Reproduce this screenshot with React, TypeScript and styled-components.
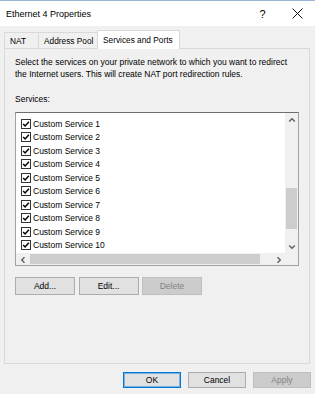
import React from "react";

import styled, { createGlobalStyle } from "styled-components";

const GlobalStyle = createGlobalStyle`
  * {
    box-sizing: border-box;
  }
  body {
    margin: 0;
    background: #f0f0f0;
    font-family: "Liberation Sans", Arial, sans-serif;
    color: #000;
  }
`;

const Window = styled.div`
  width: 315px;
  height: 394px;
  display: flex;
  flex-direction: column;
  background: #f0f0f0;
  border-top: 1px solid #9ab6d6;
  overflow: hidden;
`;

const TitleBar = styled.div`
  height: 25px;
  display: flex;
  align-items: center;
  background: #fff;
`;

const Title = styled.div`
  flex: 1;
  padding-left: 6px;
  font-size: 9px;
`;

const CaptionButton = styled.div`
  width: 35px;
  height: 25px;
  display: flex;
  align-items: center;
  justify-content: center;
  font-size: 11px;
`;

const TabStrip = styled.div`
  display: flex;
  align-items: flex-end;
  height: 19px;
  margin: 4px 0 -1px 4px;
  position: relative;
  z-index: 1;
`;

const Tab = styled.div<{ $width: number; $active?: boolean }>`
  width: ${({ $width }) => $width}px;
  height: ${({ $active }) => ($active ? 19 : 16)}px;
  margin-bottom: ${({ $active }) => ($active ? 0 : 1)}px;
  margin-left: -1px;
  padding-left: ${({ $active }) => ($active ? 5 : 5)}px;
  display: flex;
  align-items: center;
  font-size: 8.3px;
  background: ${({ $active }) => ($active ? "#fff" : "#f0f0f0")};
  border: 1px solid #d9d9d9;
  border-bottom: none;
  &:first-child {
    margin-left: 0;
  }
`;

const Panel = styled.div`
  height: 316px;
  margin: 0 5px 0 4px;
  padding: 7px 10px 0 10px;
  border: 1px solid #d9d9d9;
  background: #f0f0f0;
`;

const Description = styled.p`
  margin: 0;
  font-size: 8.5px;
  line-height: 12px;
`;

const FieldLabel = styled.div`
  margin-top: 13px;
  font-size: 8.5px;
  line-height: 12px;
`;

const ListBox = styled.div`
  margin-top: 7px;
  height: 154px;
  display: grid;
  grid-template-columns: 1fr 13px;
  grid-template-rows: 1fr 12px;
  border: 1px solid #a0a0a0;
  border-top-color: #6e6e6e;
  background: #fff;
`;

const Items = styled.div`
  padding-top: 4px;
  overflow: hidden;
  background: #fff;
`;

const Item = styled.div`
  height: 13.5px;
  display: flex;
  align-items: center;
  gap: 2px;
  padding-left: 5px;
  font-size: 8.5px;
  white-space: nowrap;
`;

const VScroll = styled.div`
  display: flex;
  flex-direction: column;
  background: #f0f0f0;
`;

const HScroll = styled.div`
  display: flex;
  background: #f0f0f0;
`;

const Corner = styled.div`
  background: #f0f0f0;
`;

const ArrowBox = styled.div`
  width: 13px;
  height: 13px;
  flex: none;
  display: flex;
  align-items: center;
  justify-content: center;
`;

const VTrack = styled.div`
  flex: 1;
  padding: 0 1px;
`;

const VThumb = styled.div<{ $offset: number; $size: number }>`
  margin-top: ${({ $offset }) => $offset}px;
  height: ${({ $size }) => $size}px;
  background: #cdcdcd;
`;

const HTrack = styled.div`
  flex: 1;
  padding: 1px 0;
`;

const HThumb = styled.div<{ $offset: number; $size: number }>`
  margin-left: ${({ $offset }) => $offset}px;
  width: ${({ $size }) => $size}px;
  height: 100%;
  background: #cdcdcd;
`;

const ButtonRow = styled.div<{ $end?: boolean }>`
  display: flex;
  justify-content: ${({ $end }) => ($end ? "flex-end" : "flex-start")};
  gap: ${({ $end }) => ($end ? 7 : 3.5)}px;
`;

const ActionRow = styled(ButtonRow)`
  margin-top: 11px;
`;

const FooterRow = styled(ButtonRow)`
  margin-top: 8px;
  padding-right: 4px;
`;

const Button = styled.button<{ $height: number; $default?: boolean }>`
  width: ${({ $height }) => ($height === 18 ? 60 : 58)}px;
  height: ${({ $height }) => $height}px;
  padding: 0;
  font-family: "Liberation Sans", Arial, sans-serif;
  font-size: 8.5px;
  color: #000;
  background: #e1e1e1;
  border: 1px solid ${({ $default }) => ($default ? "#0078d7" : "#adadad")};
  box-shadow: ${({ $default }) =>
    $default ? "inset 0 0 0 1px rgba(0, 120, 215, 0.45)" : "none"};
  &:disabled {
    color: #838383;
    background: #cccccc;
    border-color: #bfbfbf;
  }
`;

function Chevron({ dir }: { dir: "up" | "down" | "left" | "right" }) {
  const rot = { up: 0, right: 90, down: 180, left: 270 }[dir];
  return (
    <svg width="8" height="8" viewBox="0 0 8 8">
      <path
        d="M1.2 5.5 L4 2.7 L6.8 5.5"
        fill="none"
        stroke="#606060"
        strokeWidth="1.4"
        transform={`rotate(${rot} 4 4)`}
      />
    </svg>
  );
}

function CheckBox() {
  return (
    <svg width="10" height="10" viewBox="0 0 10 10" style={{ flex: "none" }}>
      <rect x="0.5" y="0.5" width="9" height="9" fill="#fff" stroke="#333" />
      <path d="M2.2 5 L4.1 7 L7.9 2.8" fill="none" stroke="#000" strokeWidth="1.5" />
    </svg>
  );
}

const services = Array.from({ length: 10 }, (_, i) => `Custom Service ${i + 1}`);

export default function App() {
  return (
    <>
      <GlobalStyle />
      <Window>
        <TitleBar>
          <Title>Ethernet 4 Properties</Title>
          <CaptionButton>?</CaptionButton>
          <CaptionButton>
            <svg width="11" height="11" viewBox="0 0 11 11">
              <path d="M0.5 0.5 L10.5 10.5 M10.5 0.5 L0.5 10.5" stroke="#111" strokeWidth="1" />
            </svg>
          </CaptionButton>
        </TitleBar>

        <TabStrip>
          <Tab $width={35}>NAT</Tab>
          <Tab $width={60}>Address Pool</Tab>
          <Tab $width={83} $active>
            Services and Ports
          </Tab>
        </TabStrip>

        <Panel>
          <Description>
            Select the services on your private network to which you want to redirect
            the Internet users. This will create NAT port redirection rules.
          </Description>
          <FieldLabel>Services:</FieldLabel>
          <ListBox>
            <Items>
              {services.map((s) => (
                <Item key={s}>
                  <CheckBox />
                  {s}
                </Item>
              ))}
            </Items>
            <VScroll>
              <ArrowBox>
                <Chevron dir="up" />
              </ArrowBox>
              <VTrack>
                <VThumb $offset={62} $size={41} />
              </VTrack>
              <ArrowBox>
                <Chevron dir="down" />
              </ArrowBox>
            </VScroll>
            <HScroll>
              <ArrowBox>
                <Chevron dir="left" />
              </ArrowBox>
              <HTrack>
                <HThumb $offset={1} $size={230} />
              </HTrack>
              <ArrowBox>
                <Chevron dir="right" />
              </ArrowBox>
            </HScroll>
            <Corner />
          </ListBox>
          <ActionRow>
            <Button $height={18}>Add...</Button>
            <Button $height={18}>Edit...</Button>
            <Button $height={18} disabled>
              Delete
            </Button>
          </ActionRow>
        </Panel>

        <FooterRow $end>
          <Button $height={16} $default>
            OK
          </Button>
          <Button $height={16}>Cancel</Button>
          <Button $height={16} disabled>
            Apply
          </Button>
        </FooterRow>
      </Window>
    </>
  );
}
